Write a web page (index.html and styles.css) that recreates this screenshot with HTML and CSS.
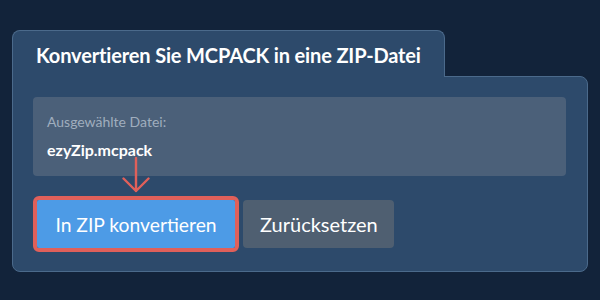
FILE: index.html
```html
<!DOCTYPE html>
<html lang="de">
<head>
    <meta charset="UTF-8">
    <meta name="viewport" content="width=device-width, initial-scale=1.0">
    <title>MCPACK in ZIP konvertieren</title>
    <link rel="stylesheet" href="styles.css">
</head>
<body>
    <div class="converter">
        <div class="tab">
            <h2>Konvertieren Sie MCPACK in eine ZIP-Datei</h2>
        </div>
        <div class="panel">
            <div class="file-box">
                <p class="file-label">Ausgewählte Datei:</p>
                <p class="file-name">ezyZip.mcpack</p>
            </div>
            <svg class="hint-arrow" width="28" height="36" viewBox="0 0 28 36">
                <path d="M14 1 V34 M1.5 21.5 L14 34 L26.5 21.5" fill="none" stroke="#e0605a" stroke-width="2.4" stroke-linecap="round" stroke-linejoin="round"/>
            </svg>
            <div class="actions">
                <div class="highlight">
                    <button class="btn btn-convert">In ZIP konvertieren</button>
                </div>
                <button class="btn btn-reset">Zurücksetzen</button>
            </div>
        </div>
    </div>
</body>
</html>
```

FILE: styles.css
```css
* {
    box-sizing: border-box;
    margin: 0;
    padding: 0;
    font-family: Lato, 'Open Sans', sans-serif;
}

body {
    background-color: #12233a;
    padding: 30px 0 0 12px;
}

.converter {
    width: 576px;
}

.tab {
    display: inline-block;
    position: relative;
    z-index: 1;
    margin-bottom: -1px;
    padding: 12px 23px 10px 23px;
    background-color: #2d4a6b;
    border: 1px solid #4b6a8b;
    border-bottom: none;
    border-radius: 8px 8px 0 0;
}

h2 {
    color: #ffffff;
    font-size: 20px;
    font-weight: 700;
    line-height: 24px;
    letter-spacing: -0.15px;
}

.panel {
    position: relative;
    background-color: #2d4a6b;
    border: 1px solid #4b6a8b;
    border-radius: 0 8px 8px 8px;
    padding: 20px 21px 19px 20px;
}

.file-box {
    background-color: #4b6079;
    border-radius: 4px;
    padding: 15px 14px 15px 14px;
}

.file-label {
    color: #a0aebe;
    font-size: 14px;
    line-height: 19px;
}

.file-name {
    margin-top: 8px;
    color: #ffffff;
    font-size: 16px;
    font-weight: 700;
    line-height: 22px;
}

.hint-arrow {
    position: absolute;
    left: 109px;
    top: 80px;
}

.actions {
    display: flex;
    align-items: center;
    gap: 4px;
    margin-top: 20px;
}

.highlight {
    border: 4px solid #e0605a;
    border-radius: 6px;
}

.btn {
    height: 48px;
    padding: 0 17px;
    border: none;
    border-radius: 4px;
    color: #ffffff;
    font-size: 20px;
    white-space: nowrap;
    cursor: pointer;
}

.btn-convert {
    display: block;
    width: 198px;
    background-color: #4d9be6;
    border-radius: 2px;
    font-size: 19.3px;
}

.btn-reset {
    width: 151px;
    background-color: #4f5f71;
}
```
